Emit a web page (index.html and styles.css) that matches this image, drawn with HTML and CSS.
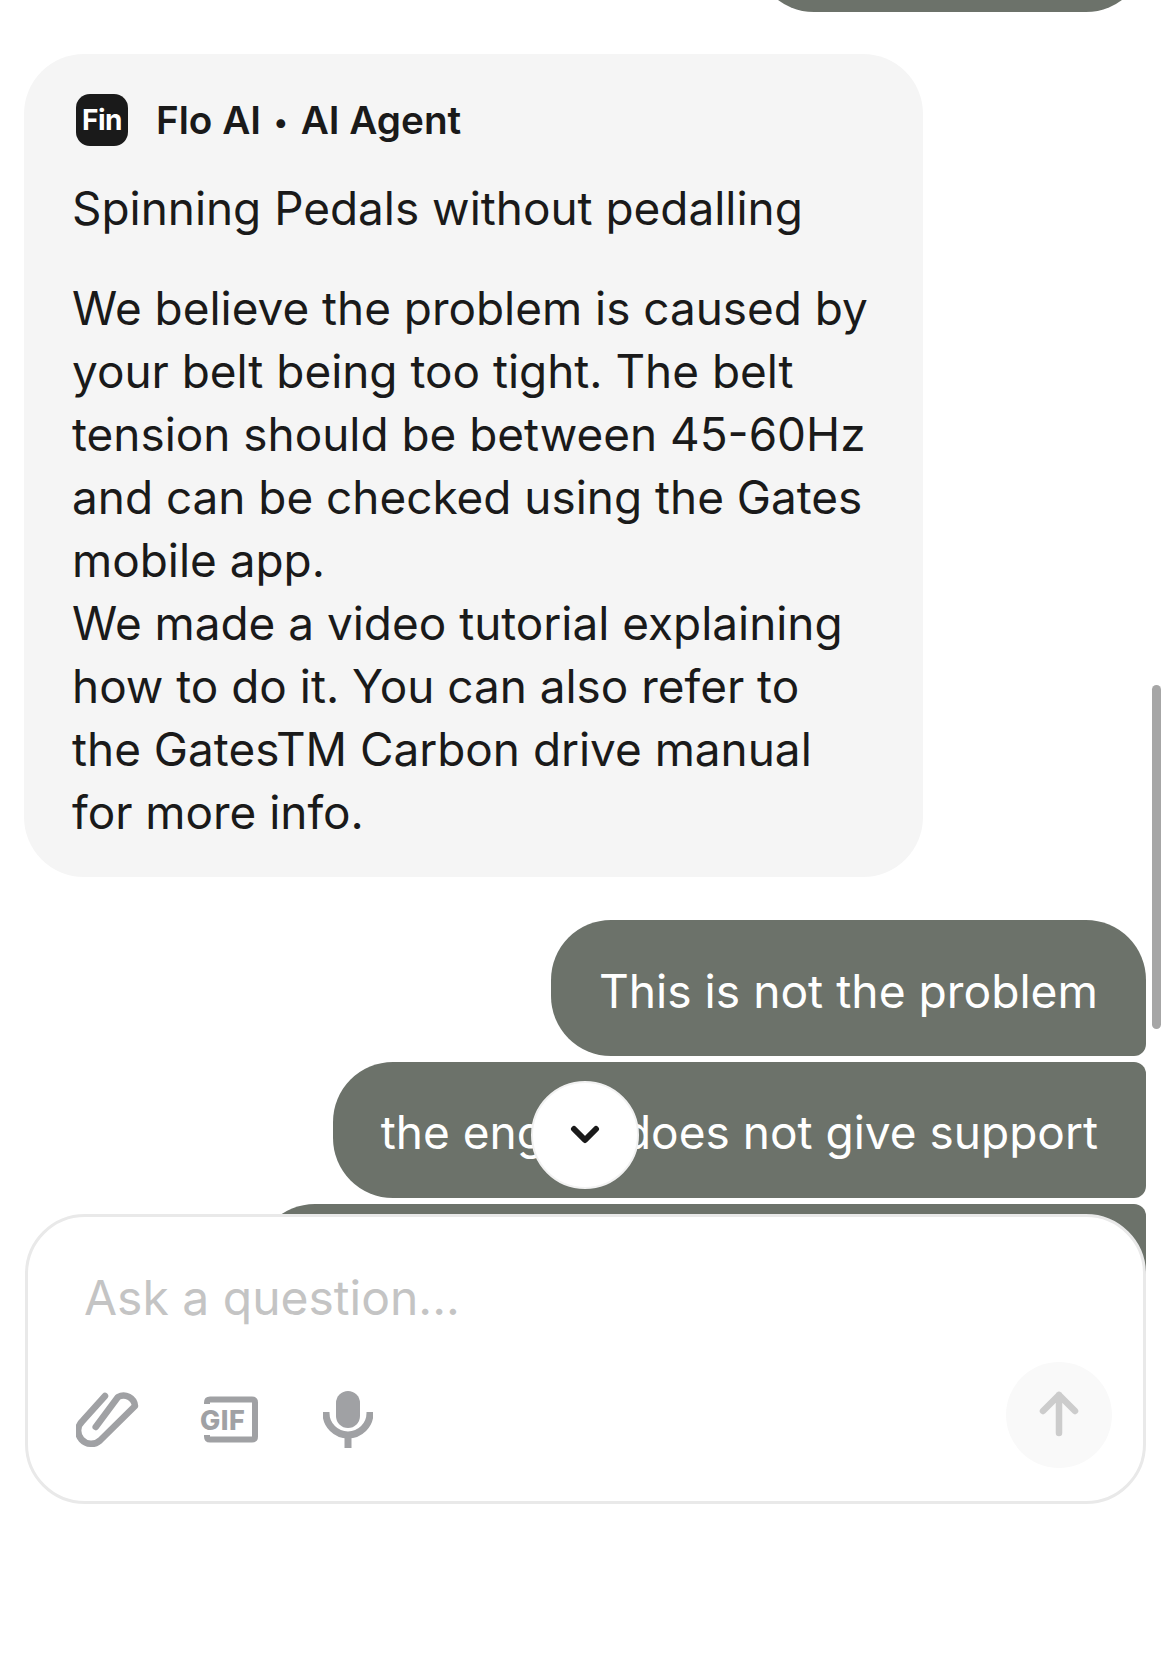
FILE: index.html
```html
<!DOCTYPE html>
<html lang="en">
<head>
<meta charset="utf-8">
<title>Flo AI chat</title>
<link rel="stylesheet" href="styles.css">
</head>
<body>
<main class="chat">
  <div class="thread">
    <div class="bubble-tail"></div>
    <article class="card">
      <header class="agent">
        <span class="fin">Fin</span>
        <span class="agent-name">Flo AI <span class="dot">•</span> AI Agent</span>
      </header>
      <p class="title">Spinning Pedals without pedalling</p>
      <p class="body">We believe the problem is caused by your belt being too tight. The belt tension should be between 45-60Hz and can be checked using the Gates mobile app.<br>We made a video tutorial explaining how to do it. You can also refer to the GatesTM Carbon drive manual for more info.</p>
    </article>
    <div class="user-group">
      <div class="user first">This is not the problem</div>
      <div class="user middle">the engine does not give support</div>
      <div class="user third"></div>
    </div>
  </div>
  <div class="scrollbar"></div>
  <button class="scroll-down" aria-label="Scroll down">
    <svg width="30" height="20" viewBox="0 0 30 20"><path class="chev" d="M4 4 L15 15 L26 4"/></svg>
  </button>
  <form class="composer">
    <div class="placeholder">Ask a question...</div>
    <div class="tools">
      <div class="tool-icons">
        <svg class="clip" width="64" height="58" viewBox="0 0 64 58"><path d="M29 5 L6.500 30 A12.500 12.500 0 0 0 24 49.500 L59 15 A11.500 11.500 0 0 0 42 6 L19.700 36"/></svg>
        <svg class="gif" width="62" height="52" viewBox="0 0 62 52"><path d="M9 10 V8.500 Q9 5.500 12 5.500 H54 Q57 5.500 57 8.500 V42.500 Q57 45.500 54 45.500 H12 Q9 45.500 9 42.500 V41"/><text x="2" y="35.500">GIF</text></svg>
        <svg class="mic" width="50" height="58" viewBox="0 0 50 58"><rect x="13" y="0" width="24" height="37" rx="12"/><path d="M3 21 V22 A22 22 0 0 0 47 22 V21"/><path d="M25 44 V57"/></svg>
      </div>
      <div class="send">
        <svg width="44" height="50" viewBox="0 0 44 50"><path d="M22 43 V5 M6 21 L22 5 L38 21"/></svg>
      </div>
    </div>
  </form>
</main>
</body>
</html>
```

FILE: styles.css
```css
* { box-sizing: border-box; }
html, body { margin: 0; height: 100%; background: #fff; }
body { font-family: Inter, "Liberation Sans", sans-serif; color: #1a1a1a; }
.chat { position: relative; width: 1170px; height: 1654px; overflow: hidden; }
.thread { display: flex; flex-direction: column; padding: 0 24px; }
.bubble-tail {
  align-self: flex-end; width: 392px; height: 136px; margin-top: -124px;
  background: #6c726a; border-radius: 60px;
}
.card {
  width: 899px; margin-top: 42px; padding: 40px 48px 33px;
  background: #f5f5f5; border-radius: 60px;
}
.agent { display: flex; align-items: center; gap: 28px; height: 52px; padding-left: 4px; }
.fin {
  width: 52px; height: 52px; border-radius: 14px; background: #1a1a1a; color: #fff;
  display: flex; align-items: center; justify-content: center;
  font-size: 28px; font-weight: 700; letter-spacing: -0.5px;
}
.agent-name { font-size: 38.7px; font-weight: 600; }
.dot { font-size: 28px; margin: 0 3px; vertical-align: 2px; }
.title { margin: 31px 0 0; font-size: 45.9px; line-height: 63px; }
.body { margin: 37px 0 0; font-size: 45.9px; line-height: 63px; }
.user-group { display: flex; flex-direction: column; align-items: flex-end; gap: 6px; margin-top: 43px; }
.user {
  height: 136px; padding: 6px 48px 0; display: flex; align-items: center;
  background: #6c726a; color: #fff; font-size: 46.2px; white-space: nowrap;
  border-radius: 60px 12px 12px 60px;
}
.user.first { border-top-right-radius: 60px; }
.user.middle { font-size: 46px; padding-top: 4px; }
.user.third { width: 891px; }
.scrollbar { position: absolute; left: 1152px; top: 685px; width: 9px; height: 344px; border-radius: 5px; background: #a6a6a6; }
.scroll-down {
  position: absolute; left: 531px; top: 1081px; width: 108px; height: 108px; padding: 0;
  display: flex; align-items: center; justify-content: center;
  border: 2px solid #f2f2f2; border-radius: 50%; background: #fff;
}
.chev { fill: none; stroke: #1a1a1a; stroke-width: 6; stroke-linecap: round; stroke-linejoin: round; }
.composer {
  position: absolute; left: 25px; top: 1214px; width: 1121px; height: 290px; margin: 0;
  padding: 52px 31px 33px 56px; display: flex; flex-direction: column; justify-content: space-between;
  background: #fff; border: 3px solid #e9e9e9; border-radius: 60px;
}
.placeholder { font-size: 48px; line-height: 58px; color: #c4c4c4; }
.tools { display: flex; align-items: center; justify-content: space-between; }
.tool-icons { display: flex; align-items: center; gap: 58px; margin: 9px 0 0 -8px; }
.clip path { fill: none; stroke: #a0a1a4; stroke-width: 6.5; stroke-linecap: round; stroke-linejoin: round; }
.mic path { fill: none; stroke: #a0a1a4; stroke-width: 7; }
.mic { margin-left: 5px; }
.mic rect { fill: #a0a1a4; }
.gif path { fill: none; stroke: #a0a1a4; stroke-width: 6; }
.gif text { font-size: 27px; font-weight: 800; letter-spacing: 0.5px; fill: #a0a1a4; font-family: Inter, sans-serif; }
.send { width: 106px; height: 106px; border-radius: 50%; background: #f9f9f9; display: flex; align-items: center; justify-content: center; }
.send path { fill: none; stroke: #ccc; stroke-width: 6.5; stroke-linecap: round; stroke-linejoin: round; }
```
